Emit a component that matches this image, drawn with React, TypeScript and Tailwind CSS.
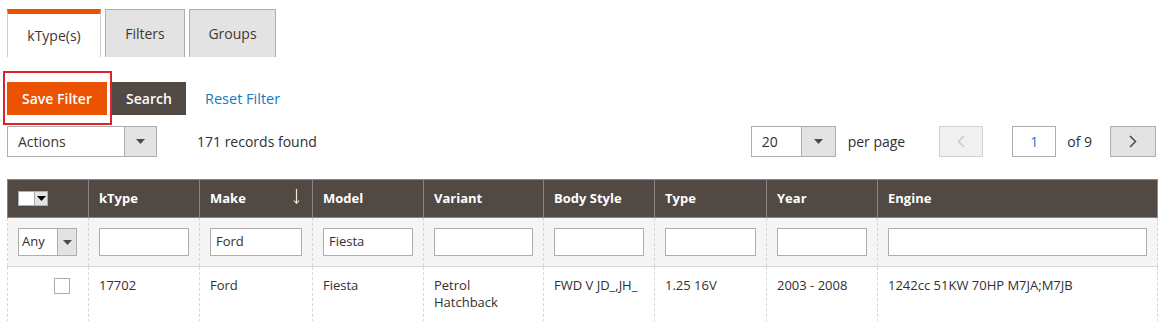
import React from "react";

const cols = [
  { w: 81, label: "" },
  { w: 111, label: "kType" },
  { w: 113, label: "Make" },
  { w: 111, label: "Model" },
  { w: 120, label: "Variant" },
  { w: 111, label: "Body Style" },
  { w: 112, label: "Type" },
  { w: 111, label: "Year" },
  { w: 280, label: "Engine" },
];

const filters = ["", "Ford", "Fiesta", "", "", "", "", ""];
const row = ["17702", "Ford", "Fiesta", "Petrol Hatchback", "FWD V JD_,JH_", "1.25 16V", "2003 - 2008", "1242cc 51KW 70HP M7JA;M7JB"];

function Caret({ className = "" }: { className?: string }) {
  return (
    <svg width="9" height="5" viewBox="0 0 9 5" className={className}>
      <path d="M0 0h9L4.5 5z" fill="currentColor" />
    </svg>
  );
}

export default function App() {
  return (
    <div className="w-[1164px] h-[321px] overflow-hidden bg-white text-[#303030] font-['Open_Sans',sans-serif] relative">
      {/* tabs */}
      <div className="flex gap-[4px] pl-[7px] pt-[9px]">
        <div className="w-[94px] h-[48px] bg-white border-x border-[#cccccc] border-t-[5px] border-t-[#eb5202] flex items-center justify-center text-[14px] text-[#41362f]">
          kType(s)
        </div>
        <div className="w-[80px] h-[48px] bg-[#e3e3e3] border border-[#adadad] border-b-0 flex items-center justify-center text-[14px] text-[#41362f]">
          Filters
        </div>
        <div className="w-[87px] h-[48px] bg-[#e3e3e3] border border-[#adadad] border-b-0 flex items-center justify-center text-[14px] text-[#41362f]">
          Groups
        </div>
      </div>

      {/* buttons */}
      <div className="flex items-center pl-[7px] mt-[25px] h-[33px]">
        <button className="w-[100px] h-[33px] bg-[#eb5202] text-white font-semibold text-[14px]">Save Filter</button>
        <button className="ml-[5px] w-[74px] h-[33px] bg-[#514943] text-white font-semibold text-[14px]">Search</button>
        <button className="ml-[19px] text-[#1979c3] text-[14.5px]">Reset Filter</button>
      </div>
      <div className="absolute left-[3px] top-[71px] w-[109px] h-[54px] border-[2.5px] border-[#e3202a]" />

      {/* actions / pager */}
      <div className="flex items-center justify-between pl-[7px] pr-[8px] mt-[11px] h-[31px]">
        <div className="flex items-center">
          <div className="flex w-[150px] h-[31px] border border-[#adadad] bg-white">
            <span className="flex-1 flex items-center pl-[10px] text-[14px] text-[#41362f]">Actions</span>
            <span className="w-[32px] border-l border-[#adadad] bg-[#e3e3e3] flex items-center justify-center text-[#514943]">
              <Caret />
            </span>
          </div>
          <span className="ml-[40px] text-[14px] text-[#303030]">171 records found</span>
        </div>
        <div className="flex items-center">
          <div className="flex w-[85px] h-[31px] border border-[#adadad] bg-white">
            <span className="flex-1 flex items-center pl-[10px] text-[14px] text-[#303030]">20</span>
            <span className="w-[34px] border-l border-[#adadad] bg-[#e3e3e3] flex items-center justify-center text-[#514943]">
              <Caret />
            </span>
          </div>
          <span className="ml-[12px] text-[14px] text-[#303030]">per page</span>
          <div className="ml-[34px] w-[44px] h-[31px] bg-[#f0f0f0] border border-[#d1d1d1] flex items-center justify-center text-[#c8c8c8]">
            <svg width="8" height="13" viewBox="0 0 8 13"><path d="M7 1L1.5 6.5 7 12" stroke="currentColor" strokeWidth="1.5" fill="none" /></svg>
          </div>
          <div className="ml-[29px] w-[44px] h-[31px] border border-[#adadad] bg-white flex items-center justify-center text-[14px] text-[#1979c3]">
            1
          </div>
          <span className="ml-[11px] text-[14px] text-[#303030]">of 9</span>
          <div className="ml-[18px] w-[46px] h-[31px] bg-[#e3e3e3] border border-[#adadad] flex items-center justify-center text-[#514943]">
            <svg width="8" height="13" viewBox="0 0 8 13"><path d="M1 1l5.5 5.5L1 12" stroke="currentColor" strokeWidth="1.5" fill="none" /></svg>
          </div>
        </div>
      </div>

      {/* grid */}
      <div className="pl-[7px] mt-[22px]">
        <table className="border-collapse table-fixed w-[1150px] text-[13px]">
          <colgroup>
            {cols.map((c, i) => (
              <col key={i} style={{ width: c.w }} />
            ))}
          </colgroup>
          <thead>
            <tr className="h-[38px] bg-[#514943]">
              {cols.map((c, i) => (
                <th
                  key={i}
                  className="border border-[#8a837f] text-left font-bold text-white px-[10px] align-middle relative"
                >
                  {i === 0 ? (
                    <div className="flex w-[30px] h-[15px] border border-[#adadad] ml-[0px]">
                      <span className="w-[15px] bg-white" />
                      <span className="flex-1 bg-[#e3e3e3] border-l border-[#adadad] flex items-center justify-center text-black">
                        <Caret />
                      </span>
                    </div>
                  ) : (
                    c.label
                  )}
                  {c.label === "Make" && (
                    <svg width="7" height="16" viewBox="0 0 7 16" className="absolute right-[12px] top-[9px] text-[#f3e9d2]">
                      <path d="M3.5 0v14" stroke="currentColor" strokeWidth="1.2" />
                      <path d="M1 11.5l2.5 3 2.5-3" stroke="currentColor" strokeWidth="1.1" fill="none" />
                    </svg>
                  )}
                </th>
              ))}
            </tr>
          </thead>
          <tbody>
            <tr className="h-[49px] bg-[#f5f5f5] border-b border-[#d6d6d6]">
              <td className="border-x border-dashed border-[#d6d6d6] pl-[10px] pr-[10px]">
                <div className="flex w-[59px] h-[28px] border border-[#adadad] bg-white">
                  <span className="flex-1 flex items-center pl-[3px] text-[13px] text-[#303030]">Any</span>
                  <span className="w-[19px] border-l border-[#adadad] bg-[#e3e3e3] flex items-center justify-center text-[#514943]">
                    <Caret />
                  </span>
                </div>
              </td>
              {filters.map((f, i) => (
                <td key={i} className="border-x border-dashed border-[#d6d6d6] px-[10px]">
                  <div className="h-[28px] border border-[#adadad] bg-white flex items-center px-[5px] text-[13px] text-[#303030]">
                    {f}
                  </div>
                </td>
              ))}
            </tr>
            <tr className="h-[55px] bg-white">
              <td className="border-x border-dashed border-[#d6d6d6] align-top pt-[11px]">
                <div className="ml-[46px] w-[16px] h-[16px] border border-[#adadad] bg-white" />
              </td>
              {row.map((v, i) => (
                <td
                  key={i}
                  className="border-x border-dashed border-[#d6d6d6] align-top px-[10px] pt-[10px] leading-[17px] text-[#303030]"
                >
                  {v === "Petrol Hatchback" ? (
                    <>
                      Petrol
                      <br />
                      Hatchback
                    </>
                  ) : (
                    v
                  )}
                </td>
              ))}
            </tr>
          </tbody>
        </table>
      </div>
    </div>
  );
}
